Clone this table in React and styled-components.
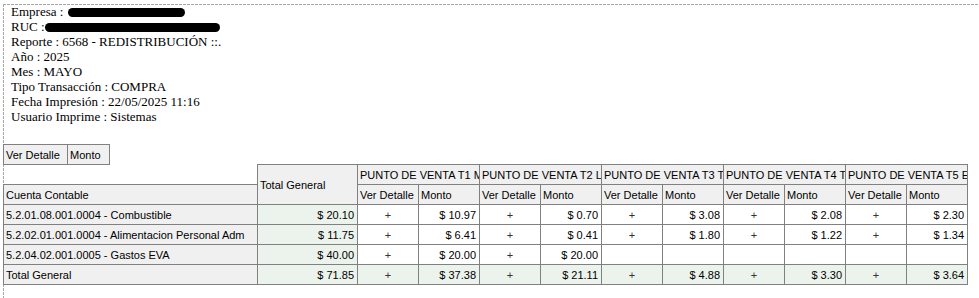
import { Fragment } from "react"
import styled, { createGlobalStyle } from "styled-components"

const GlobalStyle = createGlobalStyle`
  html, body {
    margin: 0;
    padding: 0;
    background: #ffffff;
  }
`

const Page = styled.div`
  margin: 4px 0 0 3px;
  min-height: 300px;
  background:
    repeating-linear-gradient(to right, #a6a6a6 0 3px, transparent 3px 4px) top left / 100% 1px no-repeat,
    repeating-linear-gradient(to bottom, #a6a6a6 0 3px, transparent 3px 4px) top left / 1px 100% no-repeat;
`

const Info = styled.div`
  padding-left: 8px;
  font-family: "Liberation Serif", "Times New Roman", serif;
  font-size: 13px;
  line-height: 15px;
  color: #000;
`

const Redaction = styled.span`
  display: inline-block;
  width: ${p => p.$w}px;
  height: 9px;
  margin-left: ${p => p.$gap}px;
  border-radius: 5px;
  background: #000;
  vertical-align: -1px;
`

const cellFont = `
  font-family: Tahoma, "Liberation Sans", Arial, sans-serif;
  font-size: 11px;
  color: #000;
`

const FieldBox = styled.table`
  border-collapse: collapse;
  margin-top: 20px;
  td {
    ${cellFont}
    height: 19px;
    padding: 0 3px 0 2px;
    border: 1px solid #808080;
    background: #f0f0f0;
    white-space: nowrap;
  }
`

const Pivot = styled.table`
  border-collapse: collapse;
  table-layout: fixed;
  width: 965px;
  margin-top: -1px;
  tr {
    height: 20px;
  }
`

const Cell = styled.td`
  ${cellFont}
  font-weight: normal;
  padding: 0 ${p => (p.$align === "right" ? 3 : 2)}px 0 ${p => (p.$align === "right" ? 3 : 2)}px;
  border: 1px solid #808080;
  white-space: nowrap;
  overflow: hidden;
  text-overflow: clip;
  background: ${p => (p.$head ? "#f0f0f0" : p.$total ? "#ecf3ec" : "#ffffff")};
  text-align: ${p => p.$align || "left"};
`

const Corner = styled.td`
  border: none;
  padding: 0;
`

const Plus = styled.span`
  color: #333;
`

const columns = [
  "PUNTO DE VENTA T1 MATRIZ",
  "PUNTO DE VENTA T2  LOJA",
  "PUNTO DE VENTA T3 TARQUI",
  "PUNTO DE VENTA T4 TAMBO",
  "PUNTO DE VENTA T5 EXPRESS",
]

const rows = [
  { name: "5.2.01.08.001.0004 - Combustible", total: "$ 20.10", values: ["$ 10.97", "$ 0.70", "$ 3.08", "$ 2.08", "$ 2.30"] },
  { name: "5.2.02.01.001.0004 - Alimentacion Personal Adm", total: "$ 11.75", values: ["$ 6.41", "$ 0.41", "$ 1.80", "$ 1.22", "$ 1.34"] },
  { name: "5.2.04.02.001.0005 - Gastos EVA", total: "$ 40.00", values: ["$ 20.00", "$ 20.00", null, null, null] },
]

const grand = { total: "$ 71.85", values: ["$ 37.38", "$ 21.11", "$ 4.88", "$ 3.30", "$ 3.64"] }

function ValuePair({ value, total }) {
  if (!value) {
    return (
      <>
        <Cell />
        <Cell />
      </>
    )
  }
  return (
    <>
      <Cell $total={total} $align="center"><Plus>+</Plus></Cell>
      <Cell $total={total} $align="right">{value}</Cell>
    </>
  )
}

export default function App() {
  return (
    <Page>
      <GlobalStyle />
      <Info>
        <div>Empresa :<Redaction $w={117} $gap={5} /></div>
        <div>RUC :<Redaction $w={175} $gap={0} /></div>
        <div>Reporte : 6568 - REDISTRIBUCIÓN ::.</div>
        <div>Año : 2025</div>
        <div>Mes : MAYO</div>
        <div>Tipo Transacción : COMPRA</div>
        <div>Fecha Impresión : 22/05/2025 11:16</div>
        <div>Usuario Imprime : Sistemas</div>
      </Info>

      <FieldBox>
        <tbody>
          <tr>
            <td style={{ width: 58 }}>Ver Detalle</td>
            <td style={{ width: 36 }}>Monto</td>
          </tr>
        </tbody>
      </FieldBox>

      <Pivot>
        <colgroup>
          <col style={{ width: 254 }} />
          <col style={{ width: 100 }} />
          {columns.map(c => (
            <Fragment key={c}>
              <col style={{ width: 61 }} />
              <col style={{ width: 61 }} />
            </Fragment>
          ))}
        </colgroup>
        <thead>
          <tr>
            <Corner />
            <Cell as="th" $head rowSpan={2}>Total General</Cell>
            {columns.map(c => (
              <Cell as="th" $head key={c} colSpan={2}>{c}</Cell>
            ))}
          </tr>
          <tr>
            <Cell $head>Cuenta Contable</Cell>
            {columns.map(c => (
              <Fragment key={c}>
                <Cell $head>Ver Detalle</Cell>
                <Cell $head>Monto</Cell>
              </Fragment>
            ))}
          </tr>
        </thead>
        <tbody>
          {rows.map(r => (
            <tr key={r.name}>
              <Cell $head>{r.name}</Cell>
              <Cell $total $align="right">{r.total}</Cell>
              {r.values.map((v, i) => (
                <ValuePair key={i} value={v} />
              ))}
            </tr>
          ))}
          <tr>
            <Cell $head>Total General</Cell>
            <Cell $total $align="right">{grand.total}</Cell>
            {grand.values.map((v, i) => (
              <ValuePair key={i} value={v} total />
            ))}
          </tr>
        </tbody>
      </Pivot>
    </Page>
  )
}
